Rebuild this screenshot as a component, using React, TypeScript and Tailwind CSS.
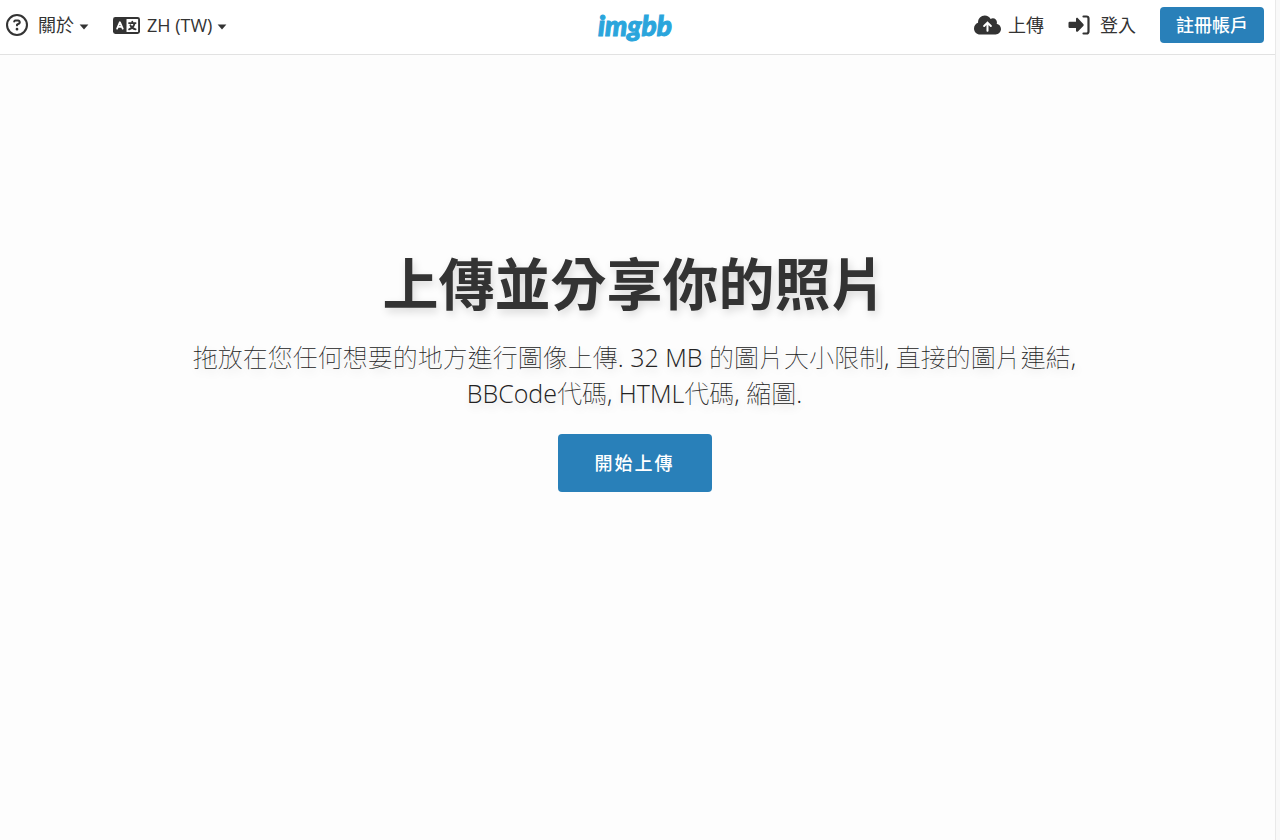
import { FaCloudArrowUp, FaRegCircleQuestion } from "react-icons/fa6";

const navItem = "flex items-center whitespace-nowrap";

function Caret() {
  return (
    <svg viewBox="0 0 10 6" className="mt-1 ml-[5px] h-[6px] w-[10px]" fill="currentColor" aria-hidden="true">
      <path d="M0.6 0.6H9.4L5 5.4Z" />
    </svg>
  );
}

function LanguageIcon() {
  return (
    <svg viewBox="0 0 27 17" className="mr-[7px] h-[17px] w-[27px]" aria-hidden="true">
      <rect width="27" height="17" rx="2.4" fill="currentColor" />
      <rect x="13.5" y="1.9" width="11.6" height="13.2" rx="0.6" fill="#fff" />
      <g fill="none" strokeLinecap="round" strokeLinejoin="round">
        <path d="M4.1 11.6 6.9 5.2 9.7 11.6M5 9.9H8.8" stroke="#fff" strokeWidth="1.8" />
        <path
          d="M16 6.1H22.6M19.3 4.6V6M21.6 6.3C20.9 9.3 18.8 11.4 16.1 12.4M17.4 8.3C18.4 10.4 20.3 11.9 22.6 12.4"
          stroke="currentColor"
          strokeWidth="1.8"
        />
      </g>
    </svg>
  );
}

function LoginIcon() {
  return (
    <svg viewBox="0 0 22 22" className="mr-[10px] size-[22px]" aria-hidden="true">
      <path
        d="M9.9 4.2 15.3 9.9a1.4 1.4 0 0 1 0 2L9.9 17.5c-.7.7-1.9.2-1.9-.8v-2.7H1.7A1.2 1.2 0 0 1 .5 12.8V9a1.2 1.2 0 0 1 1.2-1.2H8V5c0-1 1.2-1.5 1.9-.8Z"
        fill="currentColor"
      />
      <path
        d="M15.5 2.5H18.5A2 2 0 0 1 20.5 4.5V17.5A2 2 0 0 1 18.5 19.5H15.5"
        fill="none"
        stroke="currentColor"
        strokeWidth="2.2"
        strokeLinecap="round"
      />
    </svg>
  );
}

export default function App() {
  return (
    <div
      lang="zh-TW"
      className="flex min-h-screen bg-[#f9f9f9] font-['Open_Sans','Noto_Sans_CJK_TC',sans-serif] text-[#333]"
    >
      <div className="flex min-w-0 flex-1 flex-col border-r border-[#e9e9e9] bg-[#fdfdfd]">
        <header className="grid grid-cols-[1fr_auto_1fr] items-center border-b border-[#e2e2e2] bg-white pt-[7px] pr-[11px] pb-[11px] pl-[6px] text-[18px] leading-[36px]">
          <nav className="flex items-center gap-6">
            <button type="button" className={navItem}>
              <FaRegCircleQuestion className="mr-[10px] size-[22px]" />
              關於
              <Caret />
            </button>
            <button type="button" className={navItem}>
              <LanguageIcon />
              ZH (TW)
              <Caret />
            </button>
          </nav>
          <a
            href="/"
            className="font-['Lato',sans-serif] text-[28px] font-black text-[#2aa5dc] italic [-webkit-text-stroke:1px_#2aa5dc]"
          >
            imgbb
          </a>
          <nav className="flex items-center justify-end gap-6">
            <a href="/upload" className={navItem}>
              <FaCloudArrowUp className="mr-[7px] h-[22px] w-[27px]" />
              上傳
            </a>
            <a href="/login" className={navItem}>
              <LoginIcon />
              登入
            </a>
            <a href="/signup" className="rounded bg-[#2980b9] px-4 font-medium whitespace-nowrap text-white">
              註冊帳戶
            </a>
          </nav>
        </header>
        <main className="flex flex-col items-center px-4 pt-[188px] pr-[22px] text-center">
          <h1 className="text-[56px] leading-[80px] font-bold [text-shadow:2px_4px_8px_rgba(0,0,0,0.15)]">
            上傳並分享你的照片
          </h1>
          <p className="mt-4 max-w-[920px] text-[25px] leading-[36px] font-thin text-[#222] [text-shadow:2px_4px_8px_rgba(0,0,0,0.15)]">
            拖放在您任何想要的地方進行圖像上傳. <span className="font-light">32 MB</span> 的圖片大小限制,
            直接的圖片連結, <span className="font-light">BBCode</span>代碼,{" "}
            <span className="font-light">HTML</span>代碼, 縮圖.
          </p>
          <button
            type="button"
            className="mt-[23px] rounded bg-[#2980b9] px-[37px] text-[18px] leading-[58px] font-medium tracking-[2px] text-white"
          >
            開始上傳
          </button>
        </main>
      </div>
      <div className="w-1 shrink-0" />
    </div>
  );
}
